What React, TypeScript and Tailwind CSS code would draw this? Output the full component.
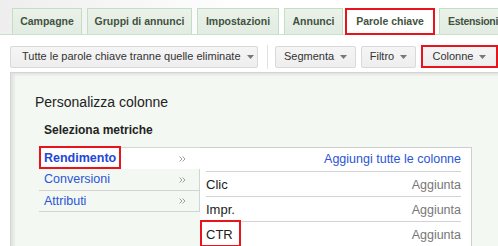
import React from "react";

const Caret = () => (
  <svg width="7" height="4" viewBox="0 0 7 4" className="ml-[6px] inline-block shrink-0">
    <path d="M0 0 L7 0 L3.5 4 Z" fill="#777" />
  </svg>
);

const Chev = () => (
  <svg width="7" height="6" viewBox="0 0 7 6" className="inline-block">
    <path d="M0.5 0.5 L3 3 L0.5 5.5 M3.5 0.5 L6 3 L3.5 5.5" stroke="#a0a0a0" strokeWidth="1" fill="none" />
  </svg>
);

export default function App() {
  const tabs = [
    { label: "Campagne", w: "w-[70px]" },
    { label: "Gruppi di annunci", w: "w-[105px]" },
    { label: "Impostazioni", w: "w-[82px]" },
    { label: "Annunci", w: "w-[59px]" },
  ];
  return (
    <div
      className="w-[498px] h-[246px] overflow-hidden bg-white relative"
      style={{ fontFamily: '"Liberation Sans", Arial, sans-serif' }}
    >
      {/* Tabs */}
      <div className="h-[35px] bg-gradient-to-r from-[#eeeeee] via-white to-white border-b border-[#c9e2c9] flex items-end pl-[12px] gap-[5px]">
        {tabs.map((t) => (
          <div
            key={t.label}
            className={`${t.w} shrink-0 h-[26px] bg-gradient-to-b from-[#eaf2ea] to-[#e2ece2] border border-b-0 border-[#c3dfc3] flex items-center justify-center text-[10.5px] font-bold text-[#43523f] whitespace-nowrap`}
          >
            {t.label}
          </div>
        ))}
        <div className="w-[90px] shrink-0 h-[27px] border-2 border-[#e8141b] bg-white flex items-center justify-center text-[10.5px] font-bold text-[#43523f] -mb-[1px] -ml-[3px] -mr-[1px]">
          Parole chiave
        </div>
        <div className="w-[60px] shrink-0 h-[26px] bg-gradient-to-b from-[#eaf2ea] to-[#e2ece2] border border-b-0 border-r-0 border-[#c3dfc3] flex items-center pl-[8px] text-[10.5px] font-bold text-[#43523f] whitespace-nowrap tracking-[-0.3px]">
          Estensioni
        </div>
      </div>

      {/* Toolbar */}
      <div className="flex items-center h-[23px] mt-[10px] pl-[10px] text-[11px] text-[#333] whitespace-nowrap">
        <div className="w-[248px] shrink-0 h-[22px] bg-gradient-to-b from-[#f5f5f5] to-[#eeeeee] border border-[#d9d9d9] rounded-[2px] flex items-center pl-[11px]">
          Tutte le parole chiave tranne quelle eliminate
          <Caret />
        </div>
        <div className="w-px shrink-0 h-[24px] bg-[#e2e2e2] ml-[9px] mr-[7px]" />
        <div className="w-[81px] shrink-0 h-[22px] bg-gradient-to-b from-[#f5f5f5] to-[#eeeeee] border border-[#d9d9d9] rounded-[2px] flex items-center justify-center">
          Segmenta
          <Caret />
        </div>
        <div className="w-[55px] shrink-0 h-[22px] ml-[5px] bg-gradient-to-b from-[#f5f5f5] to-[#eeeeee] border border-[#d9d9d9] rounded-[2px] flex items-center justify-center">
          Filtro
          <Caret />
        </div>
        <div className="w-[77px] shrink-0 h-[23px] ml-[5px] bg-gradient-to-b from-[#f5f5f5] to-[#eeeeee] border-2 border-[#e8141b] flex items-center justify-center">
          Colonne
          <Caret />
        </div>
      </div>

      {/* Panel */}
      <div className="ml-[10px] mt-[4px] h-[200px] bg-[#f4f8f3] border-t border-l border-[#d4d4d4] shadow-[inset_3px_2px_3px_rgba(0,0,0,0.08)] pl-[24px] pt-[21px]">
        <div className="text-[14px] text-[#222] leading-[17px]">Personalizza colonne</div>
        <div className="text-[12px] font-bold text-[#222] mt-[12px] ml-[9px] leading-[14px]">
          Seleziona metriche
        </div>
        <div className="flex mt-[10px] ml-[4px]">
          {/* Left menu */}
          <div className="w-[161px] shrink-0 flex flex-col text-[12.5px]">
            <div className="h-[22px] bg-white flex items-center relative border-t border-[#d6d6d6]">
              <div className="absolute left-0 top-[-2px] w-[82px] h-[23px] border-2 border-[#e8141b]" />
              <span className="pl-[5px] font-bold text-[#2347d6]">Rendimento</span>
              <span className="ml-auto mr-[14px] flex"><Chev /></span>
            </div>
            <div className="h-[22px] flex items-center border-b border-r border-[#d3d3d3]">
              <span className="pl-[5px] text-[#2a55d6]">Conversioni</span>
              <span className="ml-auto mr-[13px] flex"><Chev /></span>
            </div>
            <div className="h-[21px] flex items-center border-b border-r border-[#d3d3d3]">
              <span className="pl-[5px] text-[#2a55d6]">Attributi</span>
              <span className="ml-auto mr-[13px] flex"><Chev /></span>
            </div>
          </div>
          {/* Right panel */}
          <div className="w-[272px] shrink-0 h-[100px] bg-white border-t border-r border-[#cfcfcf] pl-[6px] pr-[10px] text-[13px]">
            <div className="h-[24px] flex items-center justify-end text-[12.5px] text-[#2a55d6] border-b border-[#d3d3d3]">
              Aggiungi tutte le colonne
            </div>
            {["Clic", "Impr.", "CTR"].map((r) => (
              <div
                key={r}
                className="h-[25px] flex items-center justify-between border-b border-[#d3d3d3] relative"
              >
                {r === "CTR" && (
                  <div className="absolute left-[-6px] top-[-2px] w-[41px] h-[27px] border-2 border-[#e8141b]" />
                )}
                <span className="text-[#222] pt-[2px]">{r}</span>
                <span className="text-[#777] text-[12.5px] pt-[2px]">Aggiunta</span>
              </div>
            ))}
          </div>
        </div>
      </div>
    </div>
  );
}
